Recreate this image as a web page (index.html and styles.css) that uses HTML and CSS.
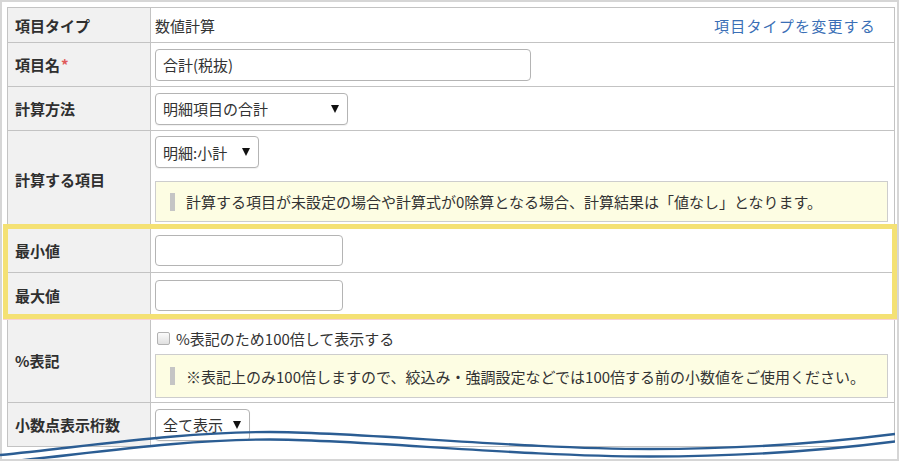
FILE: index.html
```html
<!DOCTYPE html>
<html lang="ja">
<head>
<meta charset="utf-8">
<title>数値計算</title>
<link rel="stylesheet" href="styles.css">
</head>
<body>
<div class="frame">
  <div class="form">
    <div class="row row-type">
      <div class="label">項目タイプ</div>
      <div class="value value-split">
        <span>数値計算</span>
        <a class="link">項目タイプを変更する</a>
      </div>
    </div>
    <div class="row row-std">
      <div class="label">項目名<span class="req">*</span></div>
      <div class="value">
        <div class="input input-name">合計(税抜)</div>
      </div>
    </div>
    <div class="row row-std">
      <div class="label">計算方法</div>
      <div class="value">
        <div class="select select-method"><span>明細項目の合計</span><i class="caret"></i></div>
      </div>
    </div>
    <div class="row row-calc">
      <div class="label">計算する項目</div>
      <div class="value value-stack">
        <div class="select select-item"><span>明細:小計</span><i class="caret"></i></div>
        <div class="hint hint-calc"><span class="hint-bar"></span><span>計算する項目が未設定の場合や計算式が0除算となる場合、計算結果は「値なし」となります。</span></div>
      </div>
    </div>
    <div class="hl-group">
      <div class="row row-minmax">
        <div class="label">最小値</div>
        <div class="value"><div class="input input-num"></div></div>
      </div>
      <div class="row row-minmax">
        <div class="label">最大値</div>
        <div class="value"><div class="input input-num"></div></div>
      </div>
    </div>
    <div class="row row-pct">
      <div class="label">%表記</div>
      <div class="value value-stack value-pct">
        <div class="check-line"><span class="cb"></span><span>%表記のため100倍して表示する</span></div>
        <div class="hint hint-pct"><span class="hint-bar"></span><span>※表記上のみ100倍しますので、絞込み・強調設定などでは100倍する前の小数値をご使用ください。</span></div>
      </div>
    </div>
    <div class="row row-std">
      <div class="label">小数点表示桁数</div>
      <div class="value">
        <div class="select select-digits"><span>全て表示</span><i class="caret"></i></div>
      </div>
    </div>
  </div>
  <svg class="wave" width="895" height="39" viewBox="0 0 895 39" xmlns="http://www.w3.org/2000/svg">
    <path d="M0 42.5 C90 33.5 180 19.5 270 19.5 C360 19.5 520 36.5 650 36.5 C760 36.5 840 28.5 895 21.5 L895 39 L0 39 Z" fill="#ffffff"/>
    <path d="M0 35 C90 26 180 12 270 12 C360 12 520 29 650 29 C760 29 840 21 895 14" fill="none" stroke="#2b5d93" stroke-width="2.4"/>
    <path d="M0 42.5 C90 33.5 180 19.5 270 19.5 C360 19.5 520 36.5 650 36.5 C760 36.5 840 28.5 895 21.5" fill="none" stroke="#2b5d93" stroke-width="2.4"/>
  </svg>
</div>
</body>
</html>
```

FILE: styles.css
```css
* {
  box-sizing: border-box;
}

html,
body {
  margin: 0;
  padding: 0;
  background: #ffffff;
}

body {
  width: 901px;
  height: 462px;
  overflow: hidden;
  font-family: "Noto Sans CJK JP", "Noto Sans", sans-serif;
  font-size: 15px;
  line-height: 1.4;
  color: #333333;
}

.frame {
  position: relative;
  width: 899px;
  height: 461px;
  border: 2px solid #d6d6d6;
  padding: 5px 0 0 5px;
}

.form {
  width: 888px;
  border: 1px solid #c3c3c3;
  border-bottom: none;
}

.row {
  display: grid;
  grid-template-columns: 143px 1fr;
  border-bottom: 1px solid #c3c3c3;
}

.row-type { height: 35px; }
.row-std { height: 44px; }
.row-calc { height: 97px; }
.row-minmax { height: 45px; }
.row-pct { height: 85px; }

.label {
  display: flex;
  align-items: center;
  padding-left: 7px;
  background: #f1f1f1;
  border-right: 1px solid #c3c3c3;
  font-weight: 700;
  color: #2f2f2f;
  white-space: nowrap;
}

.req {
  color: #e05a5a;
  margin-left: 1px;
}

.value {
  display: flex;
  align-items: center;
  padding: 0 6px 0 4px;
  min-width: 0;
}

.value-split {
  justify-content: space-between;
  padding-right: 18px;
}

.link {
  color: #3b6fb6;
  text-decoration: none;
  letter-spacing: 1.2px;
}

.value-stack {
  flex-direction: column;
  align-items: flex-start;
  padding-top: 5px;
}

.value-pct {
  padding-top: 9px;
}

.input,
.select {
  height: 32px;
  border: 1px solid #b4b4b4;
  border-radius: 4px;
  background: #ffffff;
  display: flex;
  align-items: center;
  padding: 0 7px;
  white-space: nowrap;
}

.input-name { width: 376px; }
.input-num { width: 188px; height: 31px; }

.select {
  justify-content: space-between;
  padding-right: 8px;
  box-shadow: 0 1px 1px rgba(0, 0, 0, 0.06);
}

.select-method { width: 193px; }
.select-item { width: 104px; }
.select-digits { width: 95px; }

.caret {
  display: block;
  width: 0;
  height: 0;
  border-left: 4px solid transparent;
  border-right: 4px solid transparent;
  border-top: 8px solid #111111;
}

.hint {
  width: 100%;
  display: flex;
  align-items: center;
  padding-left: 14px;
  background: #fdfde3;
  border: 1px solid #cdcdcd;
  white-space: nowrap;
}

.hint-calc {
  height: 41px;
  margin-top: 13px;
}

.hint-pct {
  height: 44px;
  margin-top: 5px;
}

.hint-bar {
  flex: none;
  width: 5px;
  height: 18px;
  margin-right: 11px;
  background: #c5c5c5;
}

.check-line {
  display: flex;
  align-items: center;
  height: 22px;
}

.cb {
  width: 13px;
  height: 13px;
  margin: 0 6px 0 2px;
  border: 1px solid #b2b2b2;
  border-radius: 2px;
  background: linear-gradient(#fbfbfb, #e0e0e0);
}

.hl-group {
  position: relative;
}

.hl-group::after {
  content: "";
  position: absolute;
  left: -5px;
  right: -3px;
  top: -4px;
  bottom: -1px;
  border: 5px solid #f4e174;
  box-shadow: 0 1px 0 #f8d2d2;
  pointer-events: none;
}

.wave {
  position: absolute;
  left: -2px;
  top: 418px;
  display: block;
}
```
